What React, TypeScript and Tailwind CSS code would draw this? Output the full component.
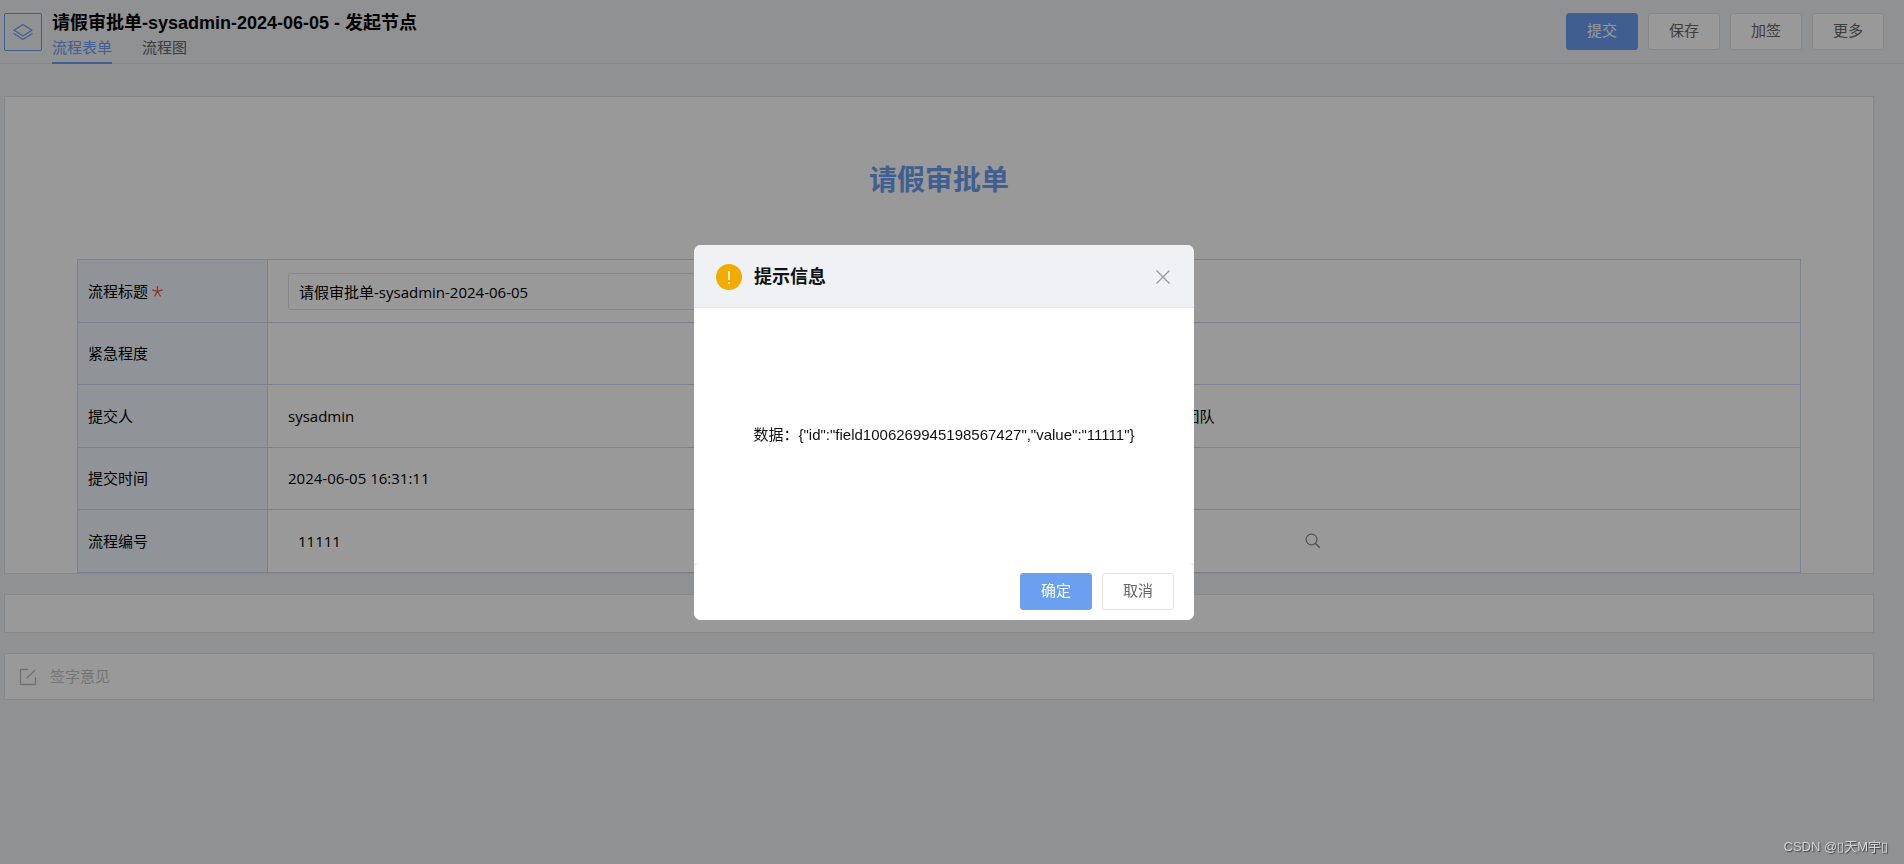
import type { ReactNode } from "react";

type Row = {
  label: string;
  required?: boolean;
  content: ReactNode;
};

const SANS = "font-['Liberation_Sans','Noto_Sans_CJK_SC',sans-serif]";
const FORM = "font-['Open_Sans','Noto_Sans_CJK_SC',sans-serif]";

function LayersIcon() {
  return (
    <svg width="20" height="18" viewBox="0 0 20 18" fill="none" stroke="currentColor" strokeWidth="1.3">
      <path d="M10 1.5 19 7.2 10 13 1 7.2Z" strokeLinejoin="round" />
      <path d="M1 10.7 10 16.5 19 10.7" strokeLinecap="round" strokeLinejoin="round" />
    </svg>
  );
}

function SearchIcon() {
  return (
    <svg width="16" height="16" viewBox="0 0 16 16" fill="none" stroke="currentColor" strokeWidth="1.2">
      <circle cx="6.5" cy="6.5" r="5.4" />
      <path d="M10.3 10.3 14.8 14.8" strokeWidth="1.5" />
    </svg>
  );
}

function SignIcon() {
  return (
    <svg width="18" height="18" viewBox="0 0 18 18" fill="none" stroke="currentColor" strokeWidth="1.3">
      <path d="M9 1.5H2.2Q1.5 1.5 1.5 2.2V15.8Q1.5 16.5 2.2 16.5H15.8Q16.5 16.5 16.5 15.8V9" />
      <path d="M7.5 10.5 16 2" />
    </svg>
  );
}

function RequiredMark() {
  return (
    <svg className="text-[#ee5a42]" width="11" height="11" viewBox="0 0 10 10" fill="none" stroke="currentColor" strokeWidth="1.2">
      <path d="M5 0V5M0.3 3.6 5 5 9.7 3.6M2.2 9.4 5 5 7.8 9.4" />
    </svg>
  );
}

function Button({ children, primary = false }: { children: ReactNode; primary?: boolean }) {
  return (
    <button
      type="button"
      className={
        primary
          ? "h-[37px] w-18 rounded-[3px] border border-[#6b9ff0] bg-[#6b9ff0] text-[15px] text-white"
          : "h-[37px] w-18 rounded-[3px] border border-[#e2e2e2] bg-white text-[15px] text-[#666]"
      }
    >
      {children}
    </button>
  );
}

const rows: Row[] = [
  {
    label: "流程标题",
    required: true,
    content: (
      <td colSpan={3} className="border border-[#ced8ef] px-5">
        <input
          id="title"
          defaultValue="请假审批单-sysadmin-2024-06-05"
          className="block h-[37px] w-[600px] rounded-[3px] border border-[#e2e2e2] px-[10px] text-black"
        />
      </td>
    ),
  },
  {
    label: "紧急程度",
    content: <td colSpan={3} className="border border-[#ced8ef]" />,
  },
  {
    label: "提交人",
    content: (
      <>
        <td className="border border-[#ced8ef] px-5">sysadmin</td>
        <td className="border border-[#ced8ef] bg-[#f0f7ff]" />
        <td className="border border-[#ced8ef] pl-[55px]">团队</td>
      </>
    ),
  },
  {
    label: "提交时间",
    content: <td colSpan={3} className="border border-[#ced8ef] px-5">2024-06-05 16:31:11</td>,
  },
  {
    label: "流程编号",
    content: (
      <td colSpan={3} className="border border-[#ced8ef] px-5">
        <div className="flex items-center">
          <input
            aria-label="流程编号"
            defaultValue="11111"
            className="h-[37px] w-[1017px] px-[10px] text-black"
          />
          <button type="button" aria-label="搜索" className="text-[#8a8a8a]">
            <SearchIcon />
          </button>
        </div>
      </td>
    ),
  },
];

function Header() {
  return (
    <header className="flex h-16 items-start border-b border-[#e2e3e5] pr-5 pl-1">
      <div className="mt-[13px] flex size-[38px] items-center justify-center rounded-[2px] border border-[#6b9ff0] text-[#6b9ff0]">
        <LayersIcon />
      </div>
      <div className="ml-[10px] flex-1 pt-[11px]">
        <h1 className="text-[18px] leading-6 font-bold text-black">
          请假审批单-sysadmin-2024-06-05 - 发起节点
        </h1>
        <nav className="flex gap-[30px] text-[15px] leading-[25px]">
          <a href="#form" className="border-b-2 border-[#6b9ff0] pb-0.5 text-[#6b9ff0]">流程表单</a>
          <a href="#chart" className="text-[#666]">流程图</a>
        </nav>
      </div>
      <div className="flex gap-[10px] pt-[13px]">
        <Button primary>提交</Button>
        <Button>保存</Button>
        <Button>加签</Button>
        <Button>更多</Button>
      </div>
    </header>
  );
}

function FormTable() {
  return (
    <table className={`w-full table-fixed border-collapse text-[15px] text-black ${FORM}`}>
      <colgroup>
        <col className="w-[190px]" />
        <col />
        <col className="w-[190px]" />
        <col />
      </colgroup>
      <tbody>
        {rows.map((row) => (
          <tr key={row.label} className="h-[63px] even:h-[62px]">
            <th scope="row" className="border border-[#ced8ef] bg-[#f0f7ff] px-[10px] text-left font-normal">
              <span className="flex items-center gap-1">
                {row.required ? <label htmlFor="title">{row.label}</label> : row.label}
                {row.required && <RequiredMark />}
              </span>
            </th>
            {row.content}
          </tr>
        ))}
      </tbody>
    </table>
  );
}

function MessageDialog() {
  return (
    <div className="fixed inset-0 flex items-center justify-center bg-black/40 pt-px pr-4">
      <div
        role="dialog"
        aria-labelledby="dialog-title"
        className="flex h-[375px] w-[500px] flex-col overflow-hidden rounded-[7px] bg-[#f0f0f0]"
      >
        <div className="flex h-[63px] items-center border-b border-[#e5e5e5] bg-[#f0f1f5] pt-0.5 pr-6 pl-[22px]">
          <svg width="26" height="26" viewBox="0 0 26 26">
            <circle cx="13" cy="13" r="13" fill="#f2ab00" />
            <path d="M12.2 7h1.6v9h-1.6zM12.2 18h1.6v2h-1.6z" fill="#fff" />
          </svg>
          <h2 id="dialog-title" className="ml-3 flex-1 text-[18px] font-bold text-[#111]">提示信息</h2>
          <button type="button" aria-label="关闭" className="text-[#999]">
            <svg width="14" height="14" viewBox="0 0 14 14" fill="none" stroke="currentColor" strokeWidth="1.3">
              <path d="M0.5 0.5 13.5 13.5M13.5 0.5 0.5 13.5" />
            </svg>
          </button>
        </div>
        <div className="flex flex-1 items-center justify-center bg-white text-[15px] text-[#111]">
          {'数据：{"id":"field1006269945198567427","value":"11111"}'}
        </div>
        <div className="flex h-[57px] justify-end gap-[10px] rounded-t-[7px] bg-white pt-[10px] pr-5">
          <Button primary>确定</Button>
          <Button>取消</Button>
        </div>
      </div>
    </div>
  );
}

export default function App() {
  return (
    <div className={`min-h-screen bg-[#f0f2f4] ${SANS}`}>
      <Header />
      <main className="mt-8 flex flex-col gap-5 pr-[30px] pl-1">
        <section className="border border-[#e2e3e5] bg-white px-[72px]">
          <h2 className="pt-16 text-center text-[28px] leading-10 font-bold text-[#6b9ff0]">请假审批单</h2>
          <div className="mt-[58px]">
            <FormTable />
          </div>
        </section>
        <section className="h-[39px] border border-[#e2e3e5] bg-white" />
        <section className="flex h-[47px] items-center gap-[13px] border border-[#e2e3e5] bg-white px-[14px] text-[#bbb]">
          <SignIcon />
          <input
            aria-label="签字意见"
            placeholder="签字意见"
            className="flex-1 pt-0.5 text-[15px] placeholder:text-[#c4c4c4]"
          />
        </section>
      </main>
      <MessageDialog />
      <div className="fixed right-4 bottom-[7px] text-[13px] leading-5 text-[#d4d4d4] [text-shadow:1px_1px_1px_#444]">
        CSDN @▯天M宇▯
      </div>
    </div>
  );
}
